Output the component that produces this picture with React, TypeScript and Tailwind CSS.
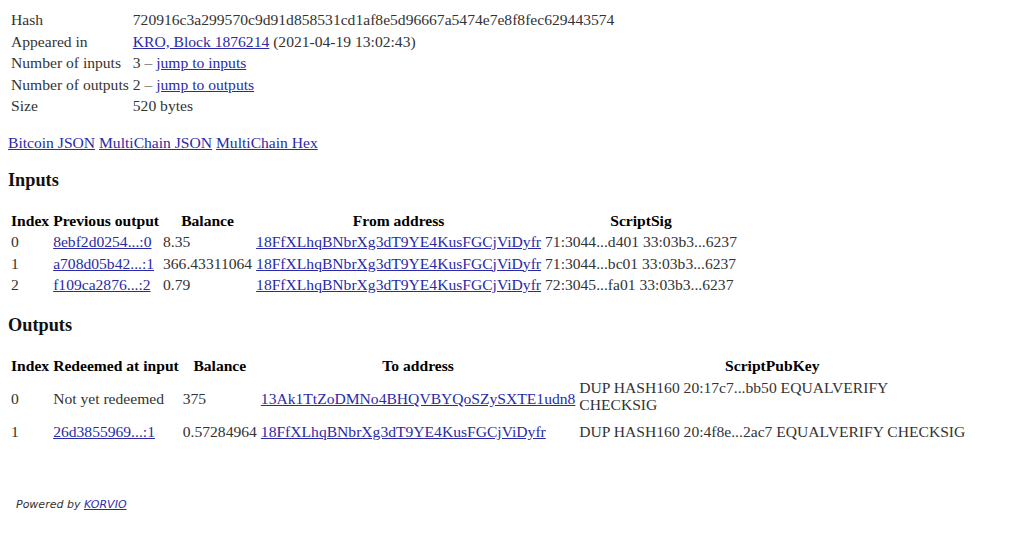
const linkCls = "text-[#2a2aa8] underline";
const tdCls = "p-px align-middle text-left";
const thCls = "p-px align-middle text-center font-bold text-black";

const inputs = [
  { index: "0", prev: "8ebf2d0254...:0", balance: "8.35", from: "18FfXLhqBNbrXg3dT9YE4KusFGCjViDyfr", sig: "71:3044...d401 33:03b3...6237" },
  { index: "1", prev: "a708d05b42...:1", balance: "366.43311064", from: "18FfXLhqBNbrXg3dT9YE4KusFGCjViDyfr", sig: "71:3044...bc01 33:03b3...6237" },
  { index: "2", prev: "f109ca2876...:2", balance: "0.79", from: "18FfXLhqBNbrXg3dT9YE4KusFGCjViDyfr", sig: "72:3045...fa01 33:03b3...6237" },
];

const Summary = () => (
  <table className="border-separate border-spacing-[2px]">
    <tbody>
      <tr>
        <td className={tdCls}>Hash</td>
        <td className={tdCls}>720916c3a299570c9d91d858531cd1af8e5d96667a5474e7e8f8fec629443574</td>
      </tr>
      <tr>
        <td className={tdCls}>Appeared in</td>
        <td className={tdCls}>
          <a href="#" className={linkCls}>KRO, Block 1876214</a> (2021-04-19 13:02:43)
        </td>
      </tr>
      <tr>
        <td className={tdCls}>Number of inputs</td>
        <td className={tdCls}>
          3 – <a href="#inputs" className={linkCls}>jump to inputs</a>
        </td>
      </tr>
      <tr>
        <td className={tdCls}>Number of outputs</td>
        <td className={tdCls}>
          2 – <a href="#outputs" className={linkCls}>jump to outputs</a>
        </td>
      </tr>
      <tr>
        <td className={tdCls}>Size</td>
        <td className={tdCls}>520 bytes</td>
      </tr>
    </tbody>
  </table>
);

const InputsTable = () => (
  <table className="border-separate border-spacing-[2px]">
    <thead>
      <tr>
        <th className={thCls}>Index</th>
        <th className={thCls}>Previous output</th>
        <th className={thCls}>Balance</th>
        <th className={thCls}>From address</th>
        <th className={thCls}>ScriptSig</th>
      </tr>
    </thead>
    <tbody>
      {inputs.map((row) => (
        <tr key={row.index}>
          <td className={tdCls}>{row.index}</td>
          <td className={tdCls}>
            <a href="#" className={linkCls}>{row.prev}</a>
          </td>
          <td className={tdCls}>{row.balance}</td>
          <td className={tdCls}>
            <a href="#" className={linkCls}>{row.from}</a>
          </td>
          <td className={tdCls}>{row.sig}</td>
        </tr>
      ))}
    </tbody>
  </table>
);

const OutputsTable = () => (
  <table className="border-separate border-spacing-[2px]">
    <thead>
      <tr>
        <th className={thCls}>Index</th>
        <th className={thCls}>Redeemed at input</th>
        <th className={thCls}>Balance</th>
        <th className={thCls}>To address</th>
        <th className={thCls}>ScriptPubKey</th>
      </tr>
    </thead>
    <tbody>
      <tr>
        <td className={tdCls}>0</td>
        <td className={tdCls}>Not yet redeemed</td>
        <td className={tdCls}>375</td>
        <td className={tdCls}>
          <a href="#" className={linkCls}>13Ak1TtZoDMNo4BHQVBYQoSZySXTE1udn8</a>
        </td>
        <td className="p-px pt-[2px] pb-[7px] align-top text-left whitespace-nowrap leading-[17px]">
          DUP HASH160 20:17c7...bb50 EQUALVERIFY
          <br />
          CHECKSIG
        </td>
      </tr>
      <tr>
        <td className={tdCls}>1</td>
        <td className={tdCls}>
          <a href="#" className={linkCls}>26d3855969...:1</a>
        </td>
        <td className={tdCls}>0.57284964</td>
        <td className={tdCls}>
          <a href="#" className={linkCls}>18FfXLhqBNbrXg3dT9YE4KusFGCjViDyfr</a>
        </td>
        <td className={`${tdCls} whitespace-nowrap`}>DUP HASH160 20:4f8e...2ac7 EQUALVERIFY CHECKSIG</td>
      </tr>
    </tbody>
  </table>
);

export default function App() {
  return (
    <div className="min-h-[543px] bg-white p-2 font-['Liberation_Serif',serif] text-[15.6px] leading-[17.5px] text-[#333]">
      <Summary />
      <p className="my-4 leading-[18px]">
        <a href="#" className={linkCls}>Bitcoin JSON</a>{" "}
        <a href="#" className={linkCls}>MultiChain JSON</a>{" "}
        <a href="#" className={linkCls}>MultiChain Hex</a>
      </p>
      <h3 id="inputs" className="my-[18px] text-[18.3px] leading-[21px] font-bold text-[#111]">Inputs</h3>
      <InputsTable />
      <h3 id="outputs" className="my-[18px] text-[18.3px] leading-[21px] font-bold text-[#111]">Outputs</h3>
      <OutputsTable />
      <div className="mt-[54px] pl-2 font-['DejaVu_Sans',sans-serif] text-[11px] leading-[13px] italic text-[#333]">
        Powered by <a href="#" className={linkCls}>KORVIO</a>
      </div>
    </div>
  );
}
